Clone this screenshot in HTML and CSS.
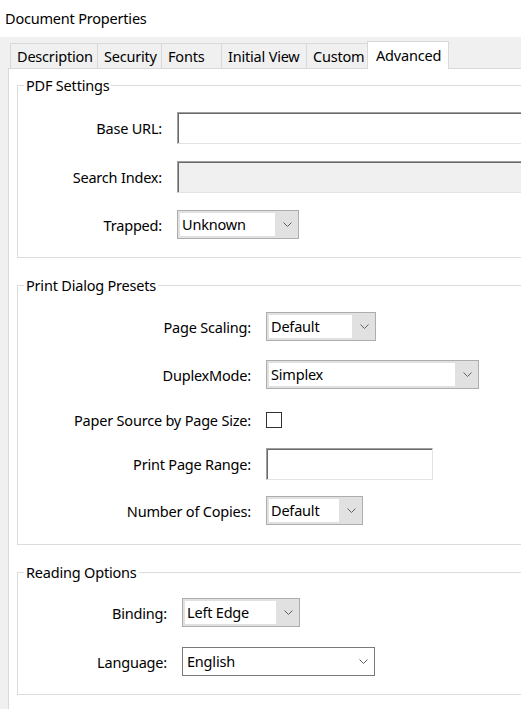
FILE: index.html
```html
<!DOCTYPE html>
<html>
<head>
<meta charset="utf-8">
<title>Document Properties</title>
<link rel="stylesheet" href="styles.css">
</head>
<body>
<div class="titlebar">Document Properties</div>
<div class="tabs">
  <div class="tab tab-desc">Description</div>
  <div class="tab tab-sec">Security</div>
  <div class="tab tab-fonts">Fonts</div>
  <div class="tab tab-init">Initial View</div>
  <div class="tab tab-custom">Custom</div>
  <div class="tab tab-adv tab-active">Advanced</div>
</div>
<div class="panel">
  <fieldset class="group g-pdf">
    <legend>PDF Settings</legend>
    <div class="row h32">
      <div class="label">Base URL:</div>
      <div class="field field-wide"></div>
    </div>
    <div class="row h32 mt17">
      <div class="label">Search Index:</div>
      <div class="field field-wide field-disabled"></div>
    </div>
    <div class="row h29 mt17">
      <div class="label">Trapped:</div>
      <div class="select sel-trapped">
        <div class="value">Unknown</div>
        <div class="arrow"><svg width="9" height="5" viewBox="0 0 9 5"><path d="M0.5 0.5 L4.5 4.5 L8.5 0.5" fill="none" stroke="#606060" stroke-width="1"/></svg></div>
      </div>
    </div>
  </fieldset>

  <fieldset class="group g-print">
    <legend>Print Dialog Presets</legend>
    <div class="row h29">
      <div class="label">Page Scaling:</div>
      <div class="select sel-scaling">
        <div class="value">Default</div>
        <div class="arrow"><svg width="9" height="5" viewBox="0 0 9 5"><path d="M0.5 0.5 L4.5 4.5 L8.5 0.5" fill="none" stroke="#606060" stroke-width="1"/></svg></div>
      </div>
    </div>
    <div class="row h29 mt19">
      <div class="label">DuplexMode:</div>
      <div class="select sel-duplex">
        <div class="value">Simplex</div>
        <div class="arrow"><svg width="9" height="5" viewBox="0 0 9 5"><path d="M0.5 0.5 L4.5 4.5 L8.5 0.5" fill="none" stroke="#606060" stroke-width="1"/></svg></div>
      </div>
    </div>
    <div class="row h16 mt23">
      <div class="label">Paper Source by Page Size:</div>
      <div class="checkbox"></div>
    </div>
    <div class="row h32 mt20">
      <div class="label">Print Page Range:</div>
      <div class="field field-range"></div>
    </div>
    <div class="row h29 mt16">
      <div class="label">Number of Copies:</div>
      <div class="select sel-copies">
        <div class="value">Default</div>
        <div class="arrow"><svg width="9" height="5" viewBox="0 0 9 5"><path d="M0.5 0.5 L4.5 4.5 L8.5 0.5" fill="none" stroke="#606060" stroke-width="1"/></svg></div>
      </div>
    </div>
  </fieldset>

  <fieldset class="group g-reading">
    <legend>Reading Options</legend>
    <div class="row h29">
      <div class="label">Binding:</div>
      <div class="select sel-binding">
        <div class="value">Left Edge</div>
        <div class="arrow"><svg width="9" height="5" viewBox="0 0 9 5"><path d="M0.5 0.5 L4.5 4.5 L8.5 0.5" fill="none" stroke="#606060" stroke-width="1"/></svg></div>
      </div>
    </div>
    <div class="row h29 mt20">
      <div class="label">Language:</div>
      <div class="combo">
        <div class="combo-value">English</div>
        <div class="combo-arrow"><svg width="9" height="5" viewBox="0 0 9 5"><path d="M0.5 0.5 L4.5 4.5 L8.5 0.5" fill="none" stroke="#606060" stroke-width="1"/></svg></div>
      </div>
    </div>
  </fieldset>
</div>
</body>
</html>
```
FILE: styles.css
```css
* { box-sizing: border-box; }
html, body { margin: 0; padding: 0; }
body {
  width: 521px;
  height: 709px;
  overflow: hidden;
  background: #f0f0f0;
  font-family: "Noto Sans", "Open Sans", sans-serif;
  font-size: 14.5px;
  letter-spacing: -0.2px;
  color: #000;
}
.titlebar {
  height: 37px;
  background: #fff;
  padding-left: 5px;
  line-height: 37px;
  white-space: nowrap;
}
.tabs {
  display: flex;
  align-items: flex-end;
  height: 28px;
  margin: 4px 0 0 10px;
  position: relative;
  z-index: 1;
}
.tab {
  flex: none;
  height: 25px;
  margin-bottom: 1px;
  margin-left: -1px;
  border: 1px solid #d9d9d9;
  border-bottom: none;
  padding: 1px 0 0 6px;
  line-height: 23px;
  white-space: nowrap;
  overflow: hidden;
}
.tab:first-child { margin-left: 0; }
.tab-active {
  height: 28px;
  margin-bottom: 0;
  background: #fff;
  padding: 0 0 0 8px;
  line-height: 26px;
}
.tab-desc { width: 88px; }
.tab-sec { width: 65px; }
.tab-fonts { width: 61px; }
.tab-init { width: 86px; }
.tab-custom { width: 62px; }
.tab-adv { width: 82px; }

.panel {
  margin: -1px 0 0 8px;
  width: 513px;
  height: 641px;
  background: #fff;
  border: 1px solid #d9d9d9;
  border-right: none;
  border-bottom: none;
  padding-top: 6px;
}
.group {
  margin: 0 0 0 8px;
  width: 504px;
  min-width: 0;
  border: 1px solid #dcdcdc;
  border-right: none;
  padding: 17px 0 18px 0;
}
.group + .group { margin-top: 17px; }
.group legend {
  margin-left: 6px;
  padding: 0 2px;
  line-height: 20px;
}
.g-print { padding-bottom: 19px; }
.g-reading { padding-top: 16px; }

.row {
  display: flex;
  align-items: center;
}
.h16 { height: 16px; }
.h29 { height: 29px; }
.h32 { height: 32px; }
.mt16 { margin-top: 16px; }
.mt17 { margin-top: 17px; }
.mt19 { margin-top: 19px; }
.mt20 { margin-top: 20px; }
.mt23 { margin-top: 23px; }

.label {
  flex: none;
  text-align: right;
  margin-right: 15px;
  line-height: 16px;
  white-space: nowrap;
}
.g-pdf .label { width: 144px; }
.g-print .label { width: 233px; }
.g-reading .label { width: 149px; }

.field {
  flex: none;
  height: 32px;
  background: #fff;
  border-top: 1px solid #a0a0a0;
  border-left: 1px solid #a0a0a0;
  border-bottom: 1px solid #e3e3e3;
  border-right: 1px solid #e3e3e3;
  box-shadow: inset 1px 1px 0 #696969;
}
.field-wide { flex: 1; border-right: none; }
.field-disabled { background: #f0f0f0; }
.field-range { width: 167px; }

.select {
  flex: none;
  display: flex;
  height: 29px;
  border: 1px solid #adadad;
  background: #e1e1e1;
  padding: 2px;
}
.select .value {
  flex: none;
  background: #fff;
  padding-left: 2px;
  line-height: 23px;
  white-space: nowrap;
}
.select .arrow {
  flex: 1;
  display: flex;
  align-items: center;
  justify-content: center;
  padding-left: 4px;
}
.arrow svg, .combo-arrow svg { display: block; }
.sel-trapped { width: 122px; }
.sel-trapped .value { width: 95px; }
.sel-scaling { width: 110px; }
.sel-scaling .value { width: 83px; }
.sel-duplex { width: 213px; }
.sel-duplex .value { width: 186px; }
.sel-copies { width: 97px; }
.sel-copies .value { width: 70px; }
.sel-binding { width: 118px; }
.sel-binding .value { width: 91px; }

.combo {
  flex: none;
  display: flex;
  align-items: center;
  width: 193px;
  height: 29px;
  border: 1px solid #7a7a7a;
  background: #fff;
  padding: 0 6px 0 4px;
}
.combo-value {
  flex: 1;
  line-height: 23px;
  white-space: nowrap;
}
.combo-arrow { flex: none; }

.checkbox {
  flex: none;
  width: 16px;
  height: 16px;
  border: 1px solid #333;
  background: #fff;
}
```
